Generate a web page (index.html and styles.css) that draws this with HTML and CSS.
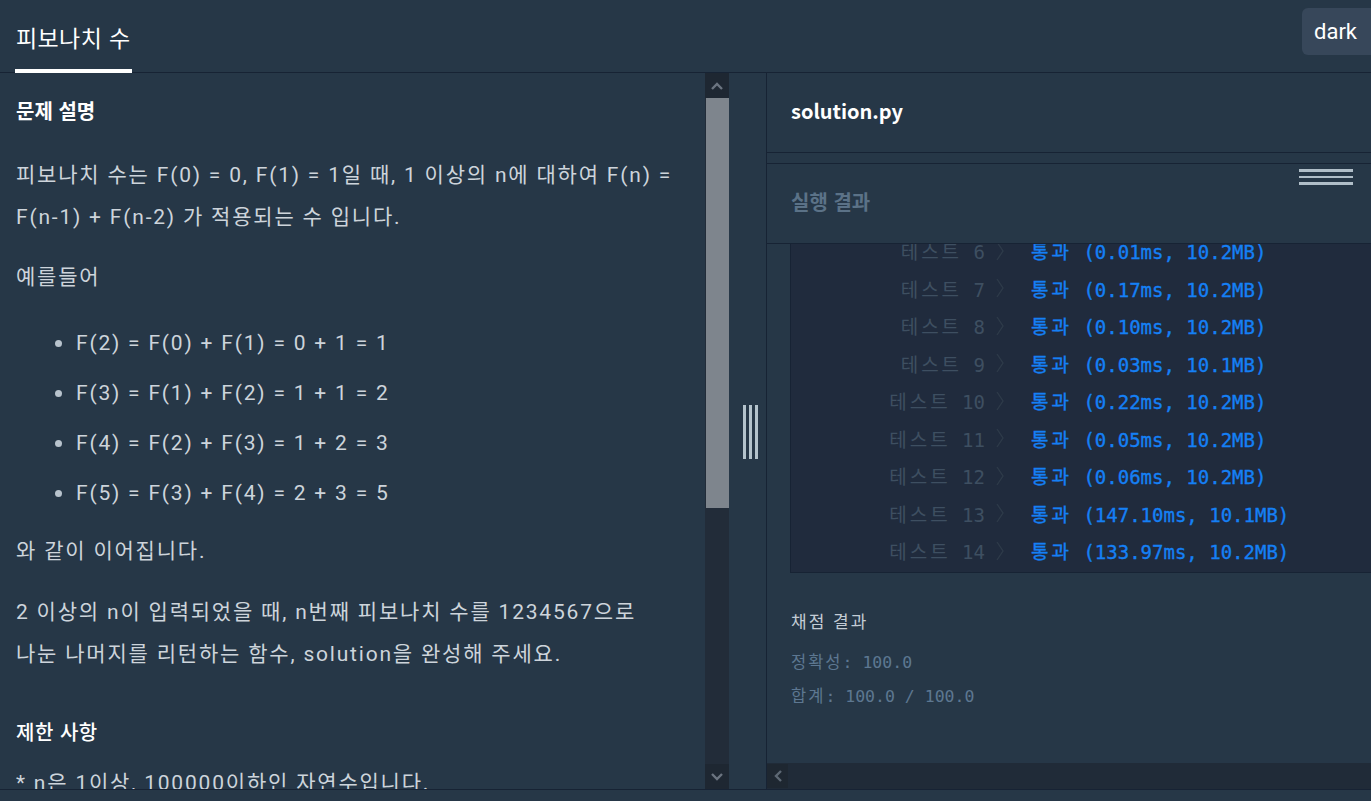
FILE: index.html
```html
<!DOCTYPE html>
<html lang="ko">
<head>
<meta charset="utf-8">
<title>피보나치 수</title>
<link rel="stylesheet" href="styles.css">
</head>
<body>
<header class="topbar">
  <div class="tab">피보나치 수</div>
  <button class="theme-btn">dark</button>
</header>
<main class="workspace">
  <section class="desc-panel">
    <div class="desc-content">
      <h5 class="desc-title">문제 설명</h5>
      <p class="p-intro">피보나치 수는 F(0) = 0, F(1) = 1일 때, 1 이상의 n에 대하여 F(n) = F(n-1) + F(n-2) 가 적용되는 수 입니다.</p>
      <p class="p-example">예를들어</p>
      <ul class="fib-list">
        <li>F(2) = F(0) + F(1) = 0 + 1 = 1</li>
        <li>F(3) = F(1) + F(2) = 1 + 1 = 2</li>
        <li>F(4) = F(2) + F(3) = 1 + 2 = 3</li>
        <li>F(5) = F(3) + F(4) = 2 + 3 = 5</li>
      </ul>
      <p class="p-cont">와 같이 이어집니다.</p>
      <p class="p-task">2 이상의 n이 입력되었을 때, n번째 피보나치 수를 1234567으로 나눈 나머지를 리턴하는 함수, solution을 완성해 주세요.</p>
      <h5 class="limit-title">제한 사항</h5>
      <p class="p-limit">* n은 1이상, 100000이하인 자연수입니다.</p>
    </div>
    <div class="vscroll">
      <div class="vbtn">
        <svg width="12" height="8" viewBox="0 0 12 8"><path d="M1 7 L6 2 L11 7" fill="none" stroke="#6b7480" stroke-width="2.4"/></svg>
      </div>
      <div class="vthumb"></div>
      <div class="vtrack"></div>
      <div class="vbtn">
        <svg width="12" height="8" viewBox="0 0 12 8"><path d="M1 1 L6 6 L11 1" fill="none" stroke="#6b7480" stroke-width="2.4"/></svg>
      </div>
    </div>
  </section>
  <div class="gutter">
    <div class="handle"><span></span><span></span><span></span></div>
  </div>
  <section class="run-panel">
    <div class="file-head">solution.py</div>
    <div class="editor-strip"></div>
    <div class="result-head">
      <h4 class="result-title">실행 결과</h4>
      <div class="resize-icon"><i></i><i></i><i></i></div>
    </div>
    <div class="result-box">
      <div class="result-list">
        <div class="row"><span class="label"><span class="ko">테스트</span> 6</span><span class="chev"><svg width="10" height="22" viewBox="0 0 10 22"><path d="M2 2 L8 11 L2 20" fill="none" stroke="#2e3b4a" stroke-width="1.3"/></svg></span><span class="res"><span class="ko">통과</span> (0.01ms, 10.2MB)</span></div>
        <div class="row"><span class="label"><span class="ko">테스트</span> 7</span><span class="chev"><svg width="10" height="22" viewBox="0 0 10 22"><path d="M2 2 L8 11 L2 20" fill="none" stroke="#2e3b4a" stroke-width="1.3"/></svg></span><span class="res"><span class="ko">통과</span> (0.17ms, 10.2MB)</span></div>
        <div class="row"><span class="label"><span class="ko">테스트</span> 8</span><span class="chev"><svg width="10" height="22" viewBox="0 0 10 22"><path d="M2 2 L8 11 L2 20" fill="none" stroke="#2e3b4a" stroke-width="1.3"/></svg></span><span class="res"><span class="ko">통과</span> (0.10ms, 10.2MB)</span></div>
        <div class="row"><span class="label"><span class="ko">테스트</span> 9</span><span class="chev"><svg width="10" height="22" viewBox="0 0 10 22"><path d="M2 2 L8 11 L2 20" fill="none" stroke="#2e3b4a" stroke-width="1.3"/></svg></span><span class="res"><span class="ko">통과</span> (0.03ms, 10.1MB)</span></div>
        <div class="row"><span class="label"><span class="ko">테스트</span> 10</span><span class="chev"><svg width="10" height="22" viewBox="0 0 10 22"><path d="M2 2 L8 11 L2 20" fill="none" stroke="#2e3b4a" stroke-width="1.3"/></svg></span><span class="res"><span class="ko">통과</span> (0.22ms, 10.2MB)</span></div>
        <div class="row"><span class="label"><span class="ko">테스트</span> 11</span><span class="chev"><svg width="10" height="22" viewBox="0 0 10 22"><path d="M2 2 L8 11 L2 20" fill="none" stroke="#2e3b4a" stroke-width="1.3"/></svg></span><span class="res"><span class="ko">통과</span> (0.05ms, 10.2MB)</span></div>
        <div class="row"><span class="label"><span class="ko">테스트</span> 12</span><span class="chev"><svg width="10" height="22" viewBox="0 0 10 22"><path d="M2 2 L8 11 L2 20" fill="none" stroke="#2e3b4a" stroke-width="1.3"/></svg></span><span class="res"><span class="ko">통과</span> (0.06ms, 10.2MB)</span></div>
        <div class="row"><span class="label"><span class="ko">테스트</span> 13</span><span class="chev"><svg width="10" height="22" viewBox="0 0 10 22"><path d="M2 2 L8 11 L2 20" fill="none" stroke="#2e3b4a" stroke-width="1.3"/></svg></span><span class="res"><span class="ko">통과</span> (147.10ms, 10.1MB)</span></div>
        <div class="row"><span class="label"><span class="ko">테스트</span> 14</span><span class="chev"><svg width="10" height="22" viewBox="0 0 10 22"><path d="M2 2 L8 11 L2 20" fill="none" stroke="#2e3b4a" stroke-width="1.3"/></svg></span><span class="res"><span class="ko">통과</span> (133.97ms, 10.2MB)</span></div>
      </div>
    </div>
    <div class="grade">
      <p class="grade-title"><span class="ko">채점 결과</span></p>
      <p class="grade-line"><span class="ko">정확성</span>: 100.0</p>
      <p class="grade-line"><span class="ko">합계</span>: 100.0 / 100.0</p>
    </div>
    <div class="hscroll">
      <div class="hbtn">
        <svg width="8" height="12" viewBox="0 0 8 12"><path d="M7 1 L2 6 L7 11" fill="none" stroke="#5d6874" stroke-width="2.4"/></svg>
      </div>
    </div>
  </section>
</main>
<footer class="statusbar"></footer>
</body>
</html>
```

FILE: styles.css
```css
* {
  box-sizing: border-box;
  margin: 0;
  padding: 0;
}

html, body {
  width: 1371px;
  height: 801px;
}

body {
  background: #263747;
  font-family: "Noto Sans CJK KR", sans-serif;
  color: #ffffff;
  overflow: hidden;
  display: flex;
  flex-direction: column;
}

/* ---------- top bar ---------- */
.topbar {
  flex: none;
  height: 73px;
  display: flex;
  justify-content: space-between;
  align-items: flex-start;
  border-bottom: 1px solid #172334;
}

.tab {
  margin-left: 15px;
  height: 73px;
  padding: 5px 1px 0;
  font-size: 23px;
  letter-spacing: 0.4px;
  line-height: 64px;
  color: #ffffff;
  border-bottom: 4px solid #ffffff;
  white-space: nowrap;
}

.theme-btn {
  margin-top: 8px;
  height: 47px;
  padding: 0 14px 0 12px;
  border: none;
  border-radius: 6px 0 0 6px;
  background: #37475a;
  color: #ffffff;
  font-family: Roboto, "Noto Sans CJK KR", sans-serif;
  font-size: 22px;
}

/* ---------- workspace ---------- */
.workspace {
  flex: none;
  height: 716px;
  display: flex;
}

.desc-panel {
  flex: none;
  width: 729px;
  display: flex;
}

.desc-content {
  width: 705px;
  height: 716px;
  overflow: hidden;
  padding: 20px 28px 0 16px;
  color: #cdd4db;
  font-family: Roboto, "Noto Sans CJK KR", sans-serif;
  font-size: 21px;
  letter-spacing: 1.8px;
  line-height: 42px;
  word-break: keep-all;
}

.desc-title {
  font-family: "Noto Sans CJK KR", sans-serif;
  font-size: 20px;
  font-weight: 700;
  letter-spacing: 0;
  line-height: 36px;
  color: #ffffff;
  margin-bottom: 25px;
}

.p-intro { margin-bottom: 18px; }

.fib-list {
  list-style: none;
  padding-left: 39px;
  margin: 20px 0 12px;
}

.fib-list li {
  display: flex;
  align-items: center;
  line-height: 50px;
  white-space: nowrap;
}

.fib-list li::before {
  content: "";
  flex: none;
  width: 7px;
  height: 7px;
  border-radius: 50%;
  background: #b8c3cd;
  margin-right: 14px;
}

.p-cont { margin-bottom: 19px; }

.p-limit { white-space: nowrap; }

.limit-title {
  font-family: "Noto Sans CJK KR", sans-serif;
  font-size: 20px;
  font-weight: 500;
  letter-spacing: 0.5px;
  line-height: 36px;
  color: #ffffff;
  margin-top: 39px;
  margin-bottom: 12px;
}

/* vertical scrollbar */
.vscroll {
  flex: none;
  width: 24px;
  display: flex;
  flex-direction: column;
  background: #222c39;
}

.vbtn {
  flex: none;
  height: 25px;
  display: flex;
  align-items: center;
  justify-content: center;
  background: #1e2732;
}

.vthumb {
  flex: none;
  height: 410px;
  margin-left: 1px;
  background: #7e858d;
}

.vtrack {
  flex: 1;
}

/* gutter */
.gutter {
  flex: none;
  width: 38px;
  border-right: 1px solid #172334;
  display: flex;
  align-items: center;
  justify-content: center;
}

.handle {
  display: flex;
  gap: 3px;
  margin-left: 5px;
  margin-top: 1px;
}

.handle span {
  width: 3px;
  height: 54px;
  background: #b4c3cc;
}

/* ---------- right panel ---------- */
.run-panel {
  flex: 1;
  display: flex;
  flex-direction: column;
  overflow: hidden;
}

.file-head {
  flex: none;
  height: 80px;
  padding-left: 24px;
  border-bottom: 1px solid #172334;
  font-size: 20px;
  font-weight: 700;
  line-height: 76px;
  color: #ffffff;
}

.editor-strip {
  flex: none;
  height: 11px;
  border-bottom: 1px solid #172334;
}

.result-head {
  flex: none;
  height: 80px;
  padding: 0 18px 0 24px;
  border-bottom: 1px solid #172334;
  display: flex;
  justify-content: space-between;
}

.result-title {
  align-self: center;
  margin-bottom: 5px;
  font-size: 20px;
  font-weight: 700;
  color: #5b7287;
}

.resize-icon {
  margin-top: 5px;
  width: 54px;
  display: flex;
  flex-direction: column;
  gap: 4px;
}

.resize-icon i {
  display: block;
  height: 2.5px;
  background: #b0bec8;
}

/* results */
.result-box {
  flex: none;
  height: 329px;
  margin-left: 23px;
  background: #202b3d;
  border-left: 1px solid #172334;
  border-bottom: 1px solid #172334;
  overflow: hidden;
}

.result-list {
  margin-top: -12px;
  font-family: "DejaVu Sans Mono", "Noto Sans CJK KR", monospace;
  font-size: 19px;
}

.row {
  display: flex;
  align-items: center;
  height: 37.5px;
  white-space: nowrap;
}

.ko {
  font-family: "Noto Sans CJK KR", sans-serif;
  letter-spacing: 3px;
}

.label {
  flex: none;
  width: 194px;
  text-align: right;
  color: #3e4f61;
}

.chev {
  flex: none;
  display: flex;
  margin: 0 0 0 10px;
  width: 36px;
}

.res {
  color: #1580f5;
  -webkit-text-stroke: 0.35px #1580f5;
}

/* grading */
.grade {
  flex: 1;
  padding: 31px 0 0 24px;
  font-family: "DejaVu Sans Mono", "Noto Sans CJK KR", monospace;
  font-size: 16.5px;
  white-space: nowrap;
}

.grade .ko {
  letter-spacing: 2px;
}

.grade p {
  height: 34px;
  line-height: 34px;
}

.grade-title {
  color: #c3ccd5;
  margin-bottom: 6px;
  font-size: 17px;
}

.grade-line {
  color: #5d7791;
}

/* horizontal scrollbar */
.hscroll {
  flex: none;
  height: 26px;
  background: #202b38;
  display: flex;
  padding: 1px 0;
}

.hbtn {
  width: 21px;
  display: flex;
  align-items: center;
  justify-content: center;
  background: #1e2731;
}

/* bottom bar */
.statusbar {
  flex: none;
  height: 12px;
  border-top: 1px solid #172334;
}
```
